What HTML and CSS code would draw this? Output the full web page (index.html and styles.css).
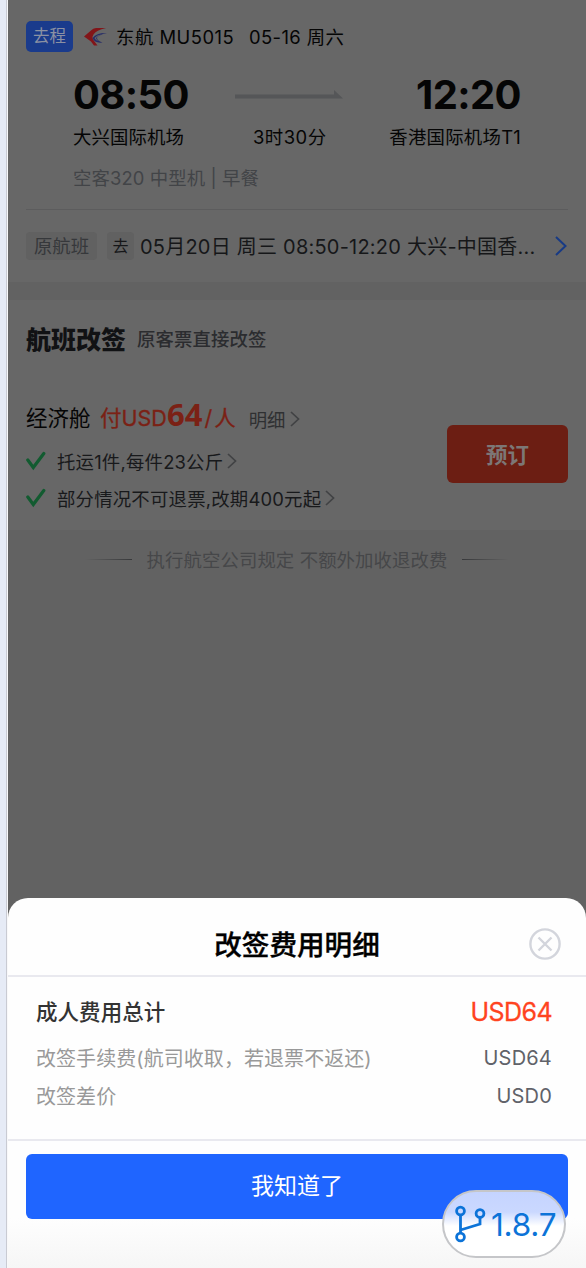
FILE: index.html
```html
<!DOCTYPE html>
<html lang="zh-CN">
<head>
<meta charset="utf-8">
<title>航班改签</title>
<link rel="stylesheet" href="styles.css">
</head>
<body>
<div class="page">
  <div class="gutter"></div>
  <main class="phone">
    <section class="flight">
      <div class="flight-head">
        <span class="trip-tag">去程</span>
        <svg class="airline" width="24" height="20" viewBox="0 0 24 20">
          <path d="M22 1H12Q9 1 7 3.500L0 9.500L7 14.500L10 18.500H13.500L9 12.500Q7.500 10 9.500 7.500Q12 3 22 1Z" fill="#821519"/>
          <path d="M8.500 11Q13 5.500 23 6Q15.500 7.500 13 10.500Q12.500 13.500 18.500 15.500Q10.500 16.500 8.500 11Z" fill="#262c68"/>
          <path d="M10.500 11Q13 8 18 7.200Q13.500 9 12 11Q12.300 13 14.500 14.300Q11.500 13.500 10.500 11Z" fill="#676767"/>
        </svg>
        <span class="flight-no">东航 MU5015</span>
        <span class="flight-date">05-16 周六</span>
      </div>
      <div class="times">
        <span class="time depart">08:50</span>
        <svg class="arrow" width="108" height="9" viewBox="0 0 108 9"><path d="M0 4.500H99V0L108 8.500H0Z" fill="#555658"/></svg>
        <span class="time arrive">12:20</span>
      </div>
      <div class="places">
        <span class="from">大兴国际机场</span>
        <span class="duration">3时30分</span>
        <span class="to">香港国际机场T1</span>
      </div>
      <div class="plane">空客320 中型机 | 早餐</div>
      <div class="original">
        <span class="old-tag">原航班</span>
        <span class="go-tag">去</span>
        <span class="old-text">05月20日 周三 08:50-12:20 大兴-中国香...</span>
        <svg class="more" width="14" height="22" viewBox="0 0 14 22"><path d="M2 2L11.500 11L2 20" fill="none" stroke="#173a85" stroke-width="2"/></svg>
      </div>
    </section>
    <section class="change">
      <div class="change-head"><h2 class="change-title">航班改签</h2><span class="change-sub">原客票直接改签</span></div>
      <div class="offer">
        <div class="offer-info">
          <div class="price-row">
            <span class="cabin">经济舱</span>
            <span class="price"><span class="currency">付USD</span><b class="amount">64</b><span class="per">/人</span></span>
            <span class="detail">明细</span>
            <svg class="chev" width="10" height="18" viewBox="0 0 10 18"><path d="M1 2L8.500 9L1 16" fill="none" stroke="#414244" stroke-width="1.700"/></svg>
          </div>
          <div class="rule">
            <svg class="check" width="20" height="20" viewBox="0 0 20 20" fill="none" stroke="#125b30" stroke-width="3.200" stroke-linecap="round"><path d="M1.800 9L7.300 16.500L17.800 2.500"/></svg>
            <span class="rule-text">托运1件,每件23公斤</span>
            <svg class="chev" width="10" height="18" viewBox="0 0 10 18"><path d="M1 2L8.500 9L1 16" fill="none" stroke="#414244" stroke-width="1.700"/></svg>
          </div>
          <div class="rule">
            <svg class="check" width="20" height="20" viewBox="0 0 20 20" fill="none" stroke="#125b30" stroke-width="3.200" stroke-linecap="round"><path d="M1.800 9L7.300 16.500L17.800 2.500"/></svg>
            <span class="rule-text">部分情况不可退票,改期400元起</span>
            <svg class="chev" width="10" height="18" viewBox="0 0 10 18"><path d="M1 2L8.500 9L1 16" fill="none" stroke="#414244" stroke-width="1.700"/></svg>
          </div>
        </div>
        <button class="book">预订</button>
      </div>
    </section>
    <div class="note"><i class="fade-left"></i><span class="note-text">执行航空公司规定 不额外加收退改费</span><i class="fade-right"></i></div>

    <div class="sheet">
      <div class="sheet-head">
        <h1 class="sheet-title">改签费用明细</h1>
        <svg class="close" width="32" height="32" viewBox="0 0 32 32" fill="none" stroke="#d3d5dc" stroke-width="2.400"><circle cx="16" cy="16" r="14.600"/><path d="M9.500 9.500L22.500 22.500M22.500 9.500L9.500 22.500"/></svg>
      </div>
      <div class="fees">
        <div class="fee total"><span class="fee-label">成人费用总计</span><span class="fee-value">USD64</span></div>
        <div class="fee"><span class="fee-label">改签手续费(航司收取，若退票不返还)</span><span class="fee-value">USD64</span></div>
        <div class="fee"><span class="fee-label">改签差价</span><span class="fee-value">USD0</span></div>
      </div>
      <div class="sheet-foot"><button class="confirm">我知道了</button></div>
    </div>
    <div class="version">
      <svg class="branch" width="32" height="38" viewBox="0 0 32 38" fill="none" stroke="#0c73d8" stroke-width="2.800"><circle cx="6.500" cy="6" r="3.900"/><circle cx="6.500" cy="32" r="3.900"/><circle cx="26" cy="8.500" r="3.900"/><path d="M6.500 10V28M26 12.500V19L6.500 25"/></svg>
      <span class="version-no">1.8.7</span>
    </div>
  </main>
</div>
</body>
</html>
```
FILE: styles.css
```css
* { box-sizing: border-box; }
body { margin: 0; font-family: Inter, "Noto Sans CJK SC", sans-serif; font-size: 18.4px; color: #050505; }
h1, h2 { margin: 0; }
button { border: 0; padding: 0; font-family: inherit; }
svg { display: block; flex: none; }
.page { display: flex; width: 586px; height: 1268px; overflow: hidden; }
.gutter { flex: none; width: 8px; background: linear-gradient(90deg, #e6ebf6 6px, #c9cbd3 6px, #c9cbd3 7px, #f8f8fa 7px); }
.phone { position: relative; flex: 1; background: #626262; white-space: nowrap; }

.flight { height: 282px; padding: 21px 18px 0; background: #676767; }
.flight-head { display: flex; align-items: center; height: 31px; }
.trip-tag { width: 47px; height: 31px; border-radius: 5px; background: #1a3b8c; color: #8b91a3; font-size: 16.5px; line-height: 31px; text-align: center; }
.airline { margin: 0 8px 0 11px; }
.flight-no, .flight-date { padding-bottom: 2px; letter-spacing: .5px; }
.flight-no { width: 133px; }
.flight-date { letter-spacing: .4px; }
.times { display: flex; align-items: center; height: 48px; margin: 19px 47px 0 47px; }
.time { flex: none; font-size: 40px; font-weight: 700; line-height: 48px; letter-spacing: -.6px; }
.depart { width: 162px; }
.arrive { flex: 1; text-align: right; }
.arrow { margin-top: -2px; }
.places { display: flex; align-items: center; height: 30px; margin: 2px 47px 0; letter-spacing: .1px; }
.from { width: 180px; }
.duration { width: 90px; letter-spacing: .5px; }
.to { flex: 1; letter-spacing: .25px; text-align: right; }
.plane { height: 30px; margin: 12px 47px 0; line-height: 30px; color: #424447; letter-spacing: .1px; }
.original { display: flex; align-items: center; height: 73px; margin-top: 16px; border-top: 1px solid #5c5c5d; color: #161719; }
.old-tag, .go-tag { flex: none; height: 28px; border-radius: 4px; background: #616161; line-height: 28px; text-align: center; }
.old-tag { width: 71px; color: #36383b; }
.go-tag { width: 27px; margin-left: 10px; font-size: 16px; }
.old-text { flex: 1; margin-left: 6px; padding-bottom: 1px; font-size: 20px; letter-spacing: .22px; }

.change { height: 230px; margin-top: 18px; padding: 0 18px; background: #676767; }
.change-head { display: flex; align-items: center; height: 76px; }
.change-title { width: 111px; padding-bottom: 1px; font-size: 25px; font-weight: 900; color: #111214; }
.change-sub { font-weight: 500; color: #2b2c2f; letter-spacing: .12px; }
.offer { display: flex; justify-content: space-between; margin-top: 22px; }
.price-row { display: flex; align-items: center; height: 44px; }
.cabin { width: 74px; padding-bottom: 4px; font-size: 21.5px; line-height: 30px; }
.price { display: flex; align-items: baseline; padding-bottom: 8px; font-size: 21.5px; line-height: 30px; color: #7b2115; }
.currency { width: 67px; -webkit-text-stroke: .3px #7b2115; }
.amount { font-family: "Noto Sans", sans-serif; font-size: 31px; font-weight: 700; line-height: 30px; }
.per { margin-left: 2px; letter-spacing: 2px; -webkit-text-stroke: .3px #7b2115; }
.detail { margin: 0 4px 0 11px; padding-bottom: 2px; color: #2f3032; }
.price-row .chev { margin-bottom: 2px; }
.rule { display: flex; align-items: center; height: 37px; color: #18191b; }
.check { margin-right: 11px; }
.rule-text { letter-spacing: .2px; }
.rule .chev { margin-left: 4px; }
.book { width: 121px; height: 58px; margin-top: 27px; padding-bottom: 2px; border-radius: 6px; background: #6c1e13; color: #7c7776; font-size: 21.5px; font-weight: 700; }

.note { display: flex; align-items: center; justify-content: center; height: 58px; color: #464749; }
.note-text { letter-spacing: .1px; }
.fade-left, .fade-right { width: 47px; height: 1px; }
.fade-left { margin-right: 14px; background: linear-gradient(90deg, transparent, #38393b); }
.fade-right { margin-left: 14px; background: linear-gradient(270deg, transparent, #38393b); }

.sheet { position: absolute; inset: 898px 0 0; border-radius: 20px 20px 0 0; background: linear-gradient(#fefefe 320px, #f6f6f6); }
.sheet-head { display: flex; align-items: center; height: 79px; padding: 14px 25px 0 0; border-bottom: 2px solid #e9e9ef; }
.sheet-title { flex: 1; padding: 2px 0 0 57px; font-size: 27.6px; font-weight: 500; line-height: 40px; color: #000; text-align: center; -webkit-text-stroke: .35px #000; }
.fees { height: 164px; padding: 11px 34px 0 28px; border-bottom: 2px solid #e9e9ef; }
.fee { display: flex; align-items: center; justify-content: space-between; height: 38px; font-size: 20px; color: #999; letter-spacing: .06px; }
.fee-value { padding-top: 2px; color: #606269; letter-spacing: .2px; }
.total { height: 50px; padding-bottom: 4px; font-size: 21.5px; font-weight: 500; color: #333; }
.total .fee-label { padding-bottom: 2px; }
.total .fee-value { padding-top: 1px; font-size: 25px; font-weight: 400; color: #ff4320; letter-spacing: -.55px; -webkit-text-stroke: .3px #ff4320; }
.sheet-foot { padding: 13px 18px 0; }
.confirm { width: 542px; height: 65px; padding-bottom: 5px; border-radius: 6px; background: #1f65ff; color: #fff; font-size: 23px; }

.version { position: absolute; left: 434px; top: 1190px; display: flex; align-items: center; width: 124px; height: 68px; padding-left: 10px; border: 2px solid #c5c6c9; border-radius: 34px; background: linear-gradient(#c5d4ff, #cad8ff 20px, #fff 34px, #fff); color: #0c73d8; }
.version-no { margin-left: 5px; padding-top: 1px; font-size: 31.5px; letter-spacing: -.2px; }
```
